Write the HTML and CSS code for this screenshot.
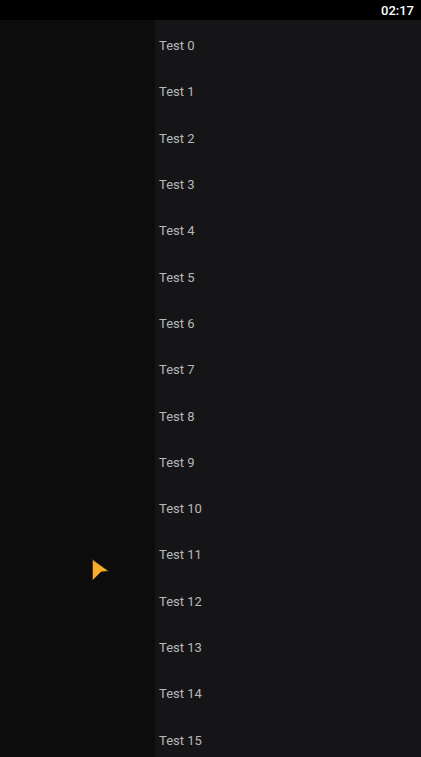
FILE: index.html
```html
<!DOCTYPE html>
<html>
<head>
<meta charset="utf-8">
<link rel="stylesheet" href="styles.css">
</head>
<body>
<div class="screen">
  <div class="statusbar"><span class="time">02:17</span></div>
  <div class="main">
    <div class="sidebar"></div>
    <ul class="list">
      <li class="row">Test 0</li>
      <li class="row">Test 1</li>
      <li class="row">Test 2</li>
      <li class="row">Test 3</li>
      <li class="row">Test 4</li>
      <li class="row">Test 5</li>
      <li class="row">Test 6</li>
      <li class="row">Test 7</li>
      <li class="row">Test 8</li>
      <li class="row">Test 9</li>
      <li class="row">Test 10</li>
      <li class="row">Test 11</li>
      <li class="row">Test 12</li>
      <li class="row">Test 13</li>
      <li class="row">Test 14</li>
      <li class="row">Test 15</li>
    </ul>
  </div>
  <svg class="cursor" width="18" height="22" viewBox="0 0 18 22">
    <polygon points="0.5,0.5 16.5,12 9,13 1,21 0.5,21" fill="#f8ac2c" stroke="#3a2a10" stroke-width="0.8"/>
  </svg>
</div>
</body>
</html>
```
FILE: styles.css
```css
html, body {
  margin: 0;
  padding: 0;
  background: #000;
}
.screen {
  position: relative;
  width: 421px;
  height: 757px;
  overflow: hidden;
  display: flex;
  flex-direction: column;
  font-family: Roboto, "Liberation Sans", sans-serif;
}
.statusbar {
  height: 20px;
  flex: none;
  background: #000;
  display: flex;
  align-items: center;
  justify-content: flex-end;
  padding-right: 7px;
}
.time {
  color: #fff;
  font-size: 13px;
  font-weight: 500;
}
.main {
  flex: 1;
  display: flex;
  min-height: 0;
}
.sidebar {
  width: 155px;
  flex: none;
  background: #0c0c0c;
}
.list {
  flex: 1;
  margin: 0;
  padding: 2.5px 0 0 0;
  list-style: none;
  background: #151517;
  overflow: hidden;
}
.row {
  height: 46.3px;
  display: flex;
  align-items: center;
  padding-left: 4px;
  color: #b8b8b8;
  font-size: 13px;
}
.cursor {
  position: absolute;
  left: 91.5px;
  top: 558.5px;
}
```
